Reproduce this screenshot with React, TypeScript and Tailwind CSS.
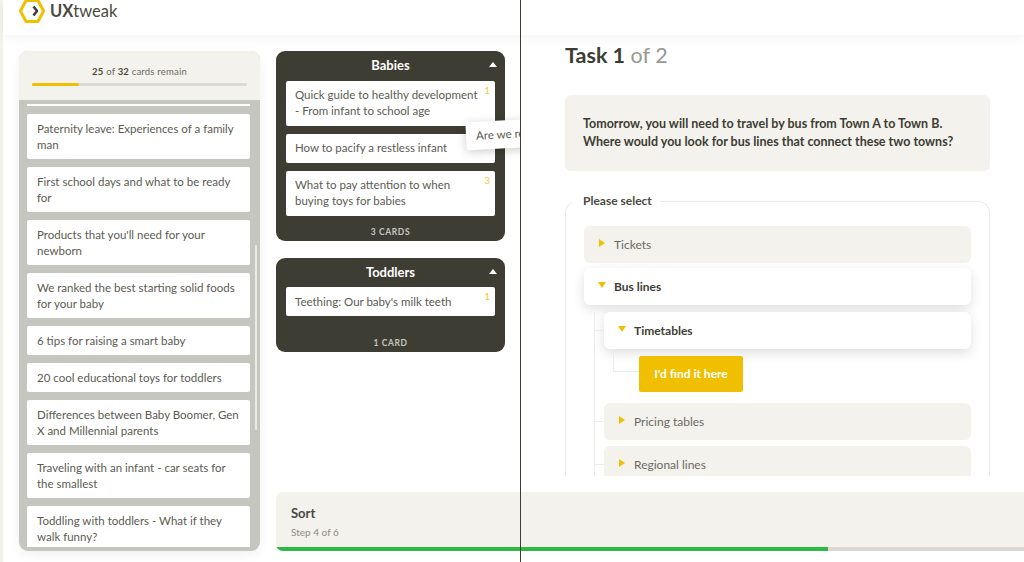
const pile = [
  "Paternity leave: Experiences of a family man",
  "First school days and what to be ready for",
  "Products that you'll need for your newborn",
  "We ranked the best starting solid foods for your baby",
  "6 tips for raising a smart baby",
  "20 cool educational toys for toddlers",
  "Differences between Baby Boomer, Gen X and Millennial parents",
  "Traveling with an infant - car seats for the smallest",
  "Toddling with toddlers - What if they walk funny?",
];

const Card = ({ text, rank }: { text: string; rank?: number }) => (
  <div className="relative rounded-[2px] bg-white py-[6.5px] pl-[9px] pr-[14px] text-[11.5px] leading-[16px] text-[#5c5b53]">
    {text}
    {rank && (
      <span className="absolute right-[5px] top-[3px] text-[10px] leading-[12px] text-[#f5c63c]">
        {rank}
      </span>
    )}
  </div>
);

const Board = ({
  title,
  cards,
  footer,
  gapBelow,
}: {
  title: string;
  cards: { text: string; rank?: number }[];
  footer: string;
  gapBelow: string;
}) => (
  <div className="rounded-[9px] bg-[#3e3d33] px-[10px]">
    <div className="relative flex h-[29.5px] items-center justify-center text-[13px] font-bold text-white">
      {title}
      <span className="absolute right-[-2px] top-[11px] h-0 w-0 border-x-[4.5px] border-b-[5px] border-x-transparent border-b-white" />
    </div>
    <div className="flex flex-col gap-[8px]">
      {cards.map((c) => (
        <Card key={c.text} {...c} />
      ))}
    </div>
    <div
      className={`${gapBelow} pb-[3px] text-center text-[8.5px] font-bold leading-[12px] tracking-[0.6px] text-[#c6c6c1]`}
    >
      {footer}
    </div>
  </div>
);

const Arrow = ({ open }: { open?: boolean }) =>
  open ? (
    <span className="mx-[-1px] mt-[-4px] h-0 w-0 border-x-[4px] border-t-[6px] border-x-transparent border-t-[#f0c000]" />
  ) : (
    <span className="mt-[-4px] h-0 w-0 border-y-[4px] border-l-[6px] border-y-transparent border-l-[#f0c000]" />
  );

const Option = ({ label, open }: { label: string; open?: boolean }) => (
  <div
    className={`flex h-[37px] shrink-0 items-center gap-[9px] rounded-[6px] pl-[15px] text-[12px] ${
      open
        ? "bg-white font-bold text-[#3e3d33] shadow-[0_4px_12px_rgba(0,0,0,0.13)]"
        : "bg-[#f3f2ed] text-[#6b6a62]"
    }`}
  >
    <Arrow open={open} />
    {label}
  </div>
);

export default function App() {
  return (
    <div className="relative flex h-[562px] w-[1024px] flex-col overflow-hidden bg-[#f3f2ed] pl-[3px] font-['Lato','Liberation_Sans',sans-serif]">
      <header className="relative z-10 flex h-[35px] shrink-0 items-center gap-[5px] bg-white pl-[15px] shadow-[0_2px_14px_rgba(0,0,0,0.05)]">
        <svg width="27" height="24" viewBox="0 0 27 24" className="mt-[-13px]" fill="none">
          <path d="M8 1.500h12L25.500 12 20 22.500H8L2.500 12z" stroke="#f0c000" strokeWidth="3" strokeLinejoin="round" />
          <path d="M15.500 7.500l3.500 4.500-3.500 4.500" stroke="#3e3d33" strokeWidth="2.600" strokeLinejoin="round" />
        </svg>
        <div className="mt-[-13px] text-[16.5px] leading-[24px] text-[#4a493f]">
          <span className="font-bold">UX</span>tweak
        </div>
      </header>

      <div className="flex min-h-0 flex-1 bg-white">
        <div className="w-[273px] shrink-0 pb-[11px] pl-[16px] pt-[16px]">
          <div className="flex h-full w-[241px] flex-col overflow-hidden rounded-[9px] bg-[#c6c6c1] shadow-[0_4px_12px_rgba(0,0,0,0.06)]">
            <div className="h-[49px] shrink-0 bg-[#f3f2ed] px-[13px] pt-[15px]">
              <p className="text-center text-[9.5px] leading-[12px] tracking-[0.2px] text-[#6b6a62]">
                <b className="text-[#4a493f]">25</b> of <b className="text-[#4a493f]">32</b> cards remain
              </p>
              <div className="mt-[5px] h-[3px] rounded-full bg-[#dad9d4]">
                <div className="h-full w-[22%] rounded-full bg-[#f0c000]" />
              </div>
            </div>
            <div className="relative min-h-0 flex-1 pb-[4px] pl-[8px] pr-[10px]">
              <div className="h-full overflow-hidden">
                <div className="mb-[8px] mt-[4px] h-[2px] bg-white" />
                <div className="flex flex-col gap-[8px] [&>div]:pl-[10px] [&>div]:pr-[10px]">
                  {pile.map((text) => (
                    <Card key={text} text={text} />
                  ))}
                </div>
              </div>
              <span className="absolute right-[3px] top-[145px] h-[185px] w-[2px] rounded-full bg-[#ebebe8]" />
            </div>
          </div>
        </div>

        <div className="flex min-w-0 flex-1 flex-col">
          <div className="flex min-h-0 flex-1">
            <div className="relative w-[245px] shrink-0 overflow-hidden pt-[16px]">
              <div className="flex w-[229px] flex-col gap-[17px]">
                <Board
                  title="Babies"
                  gapBelow="mt-[10px]"
                  footer="3 CARDS"
                  cards={[
                    { text: "Quick guide to healthy development - From infant to school age", rank: 1 },
                    { text: "How to pacify a restless infant" },
                    { text: "What to pay attention to when buying toys for babies", rank: 3 },
                  ]}
                />
                <Board
                  title="Toddlers"
                  gapBelow="mt-[21px]"
                  footer="1 CARD"
                  cards={[{ text: "Teething: Our baby's milk teeth", rank: 1 }]}
                />
              </div>
              <div className="absolute left-[190px] top-[85px] w-[90px] -rotate-[3deg] rounded-[2px] bg-white py-[6px] pl-[10px] text-[11.5px] leading-[16px] whitespace-nowrap text-[#5c5b53] shadow-[0_2px_10px_rgba(0,0,0,0.2)]">
                Are we ready
              </div>
            </div>

            <div className="flex min-w-0 flex-1 flex-col pb-[16px] pl-[44px] pr-[34px] pt-[5px]">
              <h1 className="text-[21.5px] leading-[30px] text-[#9a9992]">
                <b className="text-[#3e3d33]">Task 1</b> of 2
              </h1>
              <div className="mt-[25px] rounded-[6px] bg-[#f3f2ed] px-[18px] py-[20px] text-[12.5px] font-bold leading-[18px] text-[#3e3d33]">
                <p>Tomorrow, you will need to travel by bus from Town A to Town B.</p>
                <p>Where would you look for bus lines that connect these two towns?</p>
              </div>
              <fieldset className="mt-[22px] min-h-0 min-w-0 flex-1 overflow-hidden rounded-t-[12px] border-x border-t border-[#ebebe8] px-[18px]">
                <legend className="ml-[-11px] pl-[10px] pr-[8px] text-[12px] font-bold leading-[16px] text-[#4a493f]">
                  Please select
                </legend>
                <div className="flex flex-col gap-[5px] pt-[17px]">
                  <Option label="Tickets" />
                  <Option label="Bus lines" open />
                  <div className="relative ml-[10px] mt-[2px] flex flex-col border-l border-[#ebebe8] pl-[9px]">
                    <span className="absolute left-0 top-[18px] h-px w-[9px] bg-[#ebebe8]" />
                    <Option label="Timetables" open />
                    <div className="relative ml-[9px] h-[54px] pl-[26px] pt-[7px]">
                      <span className="absolute left-0 top-0 h-[23px] w-[26px] rounded-bl-[2px] border-b border-l border-[#ebebe8]" />
                      <div className="flex h-[36px] w-[104px] items-center justify-center rounded-[2px] bg-[#f0c000] text-[12px] font-bold text-white">
                        I'd find it here
                      </div>
                    </div>
                    <span className="absolute left-0 top-[109px] h-px w-[9px] bg-[#ebebe8]" />
                    <Option label="Pricing tables" />
                    <span className="absolute left-0 top-[152px] h-px w-[9px] bg-[#ebebe8]" />
                    <div className="mt-[6px]">
                      <Option label="Regional lines" />
                    </div>
                  </div>
                </div>
              </fieldset>
            </div>
          </div>

          <div className="mb-[11px] flex h-[59px] shrink-0 flex-col overflow-hidden rounded-l-[7px] bg-[#f3f2ed]">
            <div className="flex-1 pl-[15px] pt-[13px]">
              <p className="text-[13px] font-bold leading-[16px] text-[#4a493f]">Sort</p>
              <p className="mt-[5px] text-[10px] leading-[12px] text-[#8d8c85]">Step 4 of 6</p>
            </div>
            <div className="h-[4px] bg-[#d9d8d3]">
              <div className="h-full w-[552px] bg-[#2db944]" />
            </div>
          </div>
        </div>
      </div>

      <div className="absolute bottom-0 left-[520px] top-0 z-20 w-px bg-[#3e3d33]" />
    </div>
  );
}
